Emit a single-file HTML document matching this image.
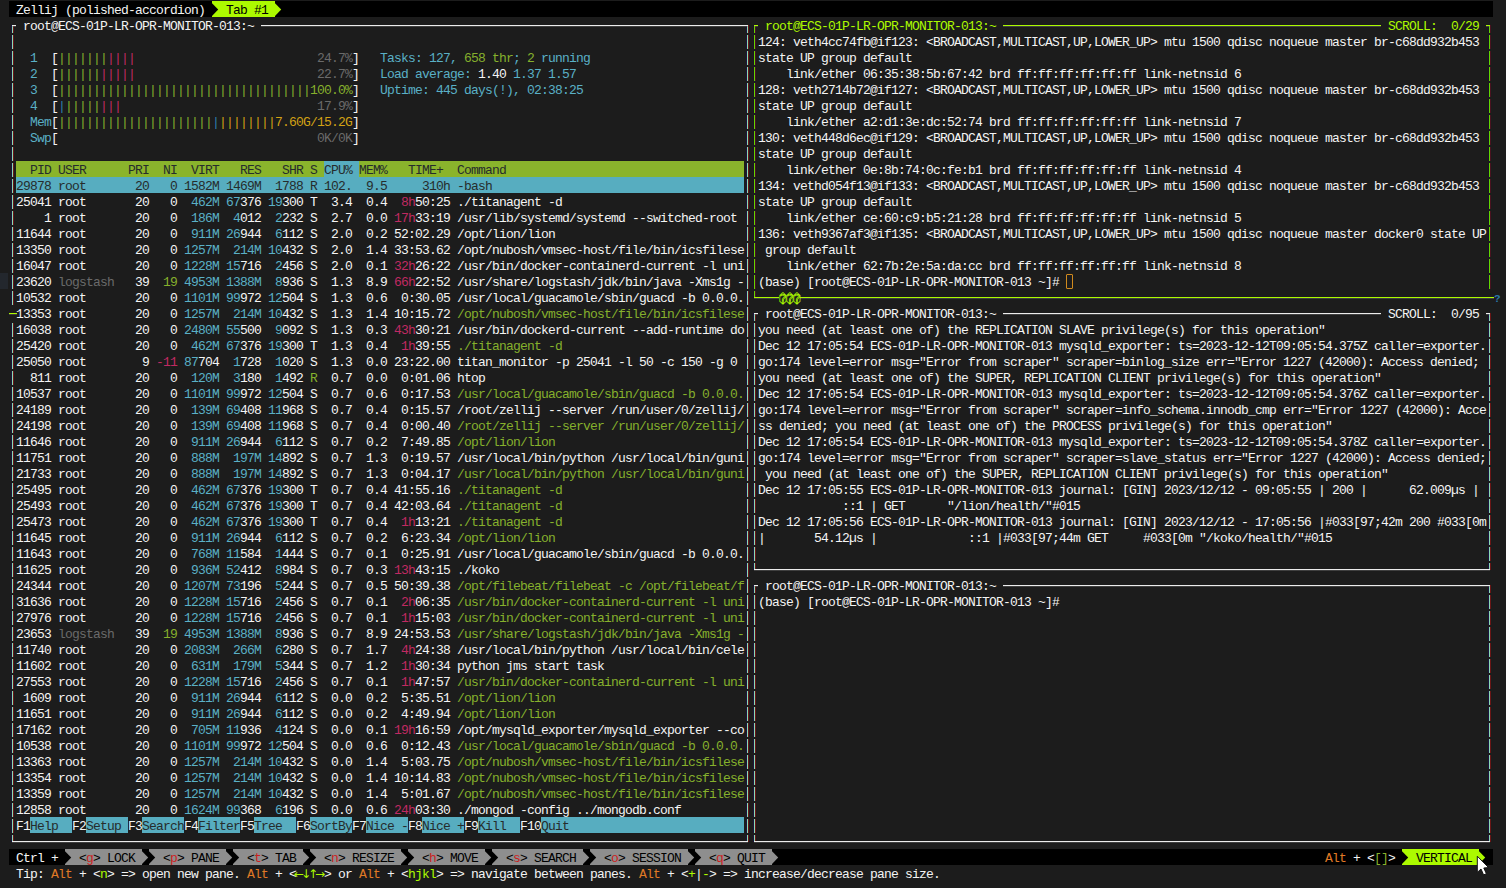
<!DOCTYPE html>
<html lang="en"><head><meta charset="utf-8"><title>Zellij (polished-accordion)</title>
<style>
html,body{margin:0;padding:0}
body{width:1506px;height:888px;overflow:hidden;background:#1c1c1c;position:relative;font-family:"Liberation Mono",monospace;font-size:13.0px;letter-spacing:-0.8013px;}
#s{position:absolute;left:0;top:0;width:1506px;height:888px;overflow:hidden}
.r{position:absolute;left:0;height:16px;line-height:16px;white-space:pre}
.r span{position:absolute;top:2px;height:16px;line-height:16px;white-space:pre}
.b{position:absolute;height:16px}
i{display:block;font-style:normal}
.h{position:absolute;height:1px;box-shadow:0 1px 0 rgba(128,128,128,.35)}
.s{position:absolute;width:1px}
.v{position:absolute;width:3px;background-repeat:no-repeat;background-size:1px 100%,1px 100%,1px 100%;background-position:0 0,1px 0,2px 0}
.vw{background-image:repeating-linear-gradient(to bottom,transparent 0,transparent 2px,#1a1440 2px,#1a1440 16px),repeating-linear-gradient(to bottom,transparent 0,transparent 2px,#8cdab4 2px,#8cdab4 16px),repeating-linear-gradient(to bottom,transparent 0,transparent 2px,#6a1616 2px,#6a1616 16px)}
.vg{background-image:repeating-linear-gradient(to bottom,transparent 0,transparent 2px,#1a1224 2px,#1a1224 16px),repeating-linear-gradient(to bottom,transparent 0,transparent 2px,#62d800 2px,#62d800 16px),repeating-linear-gradient(to bottom,transparent 0,transparent 2px,#4a1220 2px,#4a1220 16px)}
.sw{background:#8cdab4;box-shadow:-1px 0 0 #1a1440,1px 0 0 #6a1616}
.sg{background:#62d800;box-shadow:-1px 0 0 #1a1224,1px 0 0 #4a1220}
.a{position:absolute;display:block}
.r span.fuD{font-family:"DejaVu Sans Mono",monospace;font-size:12px;letter-spacing:-.22px;top:2px;color:transparent;-webkit-text-stroke:.7px #acfa00}
.r span.fuA{font-family:"DejaVu Sans",sans-serif;font-size:12px;letter-spacing:0;margin-left:-2px;top:1px}
.cur{position:absolute;width:5px;height:13px;border:1px solid #d08a1e;border-radius:1px;margin-top:1px}
.fw{color:#f4f4f4}
.fc{color:#5ab0c6}
.fg{color:#86b02c}
.fuG{color:#acfa00}
.fm{color:#c02a62}
.fy{color:#d2a114}
.fo{color:#e07a26}
.fd{color:#6a6a6a}
.fk{color:#262c2c}
.fuK{color:#000000}
.fr{color:#cc1f1f}
.fb{color:#2f7fb0}
.fuA{color:#acfa00}
.fuD{color:#9fe800}
</style></head><body><div id="s">
<i class="b" style="left:9px;top:1px;width:1484px;background:#000"></i><i class="b" style="left:219px;top:1px;width:56px;background:#acfa00"></i><i class="b" style="left:16px;top:161px;width:728px;background:#8ab42c"></i><i class="b" style="left:324px;top:161px;width:35px;background:#57adc0"></i><i class="b" style="left:16px;top:177px;width:728px;background:#57adc0"></i><i class="b" style="left:30px;top:817px;width:42px;background:#57adc0"></i><i class="b" style="left:86px;top:817px;width:42px;background:#57adc0"></i><i class="b" style="left:142px;top:817px;width:42px;background:#57adc0"></i><i class="b" style="left:198px;top:817px;width:42px;background:#57adc0"></i><i class="b" style="left:254px;top:817px;width:42px;background:#57adc0"></i><i class="b" style="left:310px;top:817px;width:42px;background:#57adc0"></i><i class="b" style="left:366px;top:817px;width:42px;background:#57adc0"></i><i class="b" style="left:422px;top:817px;width:42px;background:#57adc0"></i><i class="b" style="left:478px;top:817px;width:42px;background:#57adc0"></i><i class="b" style="left:541px;top:817px;width:203px;background:#57adc0"></i><i class="b" style="left:9px;top:849px;width:1484px;background:#000"></i><i class="b" style="left:72px;top:849px;width:70px;background:#8e8e8e"></i><i class="b" style="left:156px;top:849px;width:70px;background:#8e8e8e"></i><i class="b" style="left:240px;top:849px;width:63px;background:#8e8e8e"></i><i class="b" style="left:317px;top:849px;width:84px;background:#8e8e8e"></i><i class="b" style="left:415px;top:849px;width:70px;background:#8e8e8e"></i><i class="b" style="left:499px;top:849px;width:84px;background:#8e8e8e"></i><i class="b" style="left:597px;top:849px;width:91px;background:#8e8e8e"></i><i class="b" style="left:702px;top:849px;width:70px;background:#8e8e8e"></i><i class="b" style="left:1409px;top:849px;width:70px;background:#acfa00"></i>
<svg class="a" style="left:212px;top:1px;background:#acfa00" width="7" height="16" viewBox="0 0 7 16"><polygon points="0,2.3 6.2,8.6 0,14.9" fill="#000"/></svg><svg class="a" style="left:275px;top:1px;background:#000" width="7" height="16" viewBox="0 0 7 16"><polygon points="0,2.3 6.2,8.6 0,14.9" fill="#acfa00"/></svg><i class="s sw" style="left:12px;top:25px;height:8px"></i><i class="h" style="left:12px;top:25px;width:4px;background:#ececec"></i><i class="h" style="left:261px;top:25px;width:483px;background:#ececec"></i><i class="s sw" style="left:747px;top:25px;height:8px"></i><i class="h" style="left:744px;top:25px;width:4px;background:#ececec"></i><i class="v vw" style="left:11px;top:33px;height:272px"></i><i class="v vw" style="left:11px;top:321px;height:512px"></i><i class="v vw" style="left:746px;top:33px;height:800px"></i><i class="s sw" style="left:12px;top:835px;height:7px"></i><i class="h" style="left:12px;top:841px;width:4px;background:#ececec"></i><i class="h" style="left:16px;top:841px;width:728px;background:#ececec"></i><i class="s sw" style="left:747px;top:835px;height:7px"></i><i class="h" style="left:744px;top:841px;width:4px;background:#ececec"></i><i class="s sg" style="left:754px;top:25px;height:8px"></i><i class="h" style="left:754px;top:25px;width:4px;background:#acfa00"></i><i class="h" style="left:1003px;top:25px;width:378px;background:#acfa00"></i><i class="s sg" style="left:1489px;top:25px;height:8px"></i><i class="h" style="left:1486px;top:25px;width:4px;background:#acfa00"></i><i class="v vg" style="left:753px;top:33px;height:256px"></i><i class="v vg" style="left:1488px;top:33px;height:256px"></i><i class="s sg" style="left:754px;top:291px;height:7px"></i><i class="h" style="left:754px;top:297px;width:4px;background:#acfa00"></i><i class="h" style="left:758px;top:297px;width:21px;background:#acfa00"></i><i class="h" style="left:800px;top:297px;width:694px;background:#acfa00"></i><i class="s sw" style="left:754px;top:313px;height:8px"></i><i class="h" style="left:754px;top:313px;width:4px;background:#ececec"></i><i class="h" style="left:1003px;top:313px;width:378px;background:#ececec"></i><i class="s sw" style="left:1489px;top:313px;height:8px"></i><i class="h" style="left:1486px;top:313px;width:4px;background:#ececec"></i><i class="v vw" style="left:753px;top:321px;height:240px"></i><i class="v vw" style="left:1488px;top:321px;height:240px"></i><i class="s sw" style="left:754px;top:563px;height:7px"></i><i class="h" style="left:754px;top:569px;width:4px;background:#ececec"></i><i class="h" style="left:758px;top:569px;width:728px;background:#ececec"></i><i class="s sw" style="left:1489px;top:563px;height:7px"></i><i class="h" style="left:1486px;top:569px;width:4px;background:#ececec"></i><i class="s sw" style="left:754px;top:585px;height:8px"></i><i class="h" style="left:754px;top:585px;width:4px;background:#ececec"></i><i class="h" style="left:1003px;top:585px;width:483px;background:#ececec"></i><i class="s sw" style="left:1489px;top:585px;height:8px"></i><i class="h" style="left:1486px;top:585px;width:4px;background:#ececec"></i><i class="v vw" style="left:753px;top:593px;height:240px"></i><i class="v vw" style="left:1488px;top:593px;height:240px"></i><i class="s sw" style="left:754px;top:835px;height:7px"></i><i class="h" style="left:754px;top:841px;width:4px;background:#ececec"></i><i class="h" style="left:758px;top:841px;width:728px;background:#ececec"></i><i class="s sw" style="left:1489px;top:835px;height:7px"></i><i class="h" style="left:1486px;top:841px;width:4px;background:#ececec"></i><i class="cur" style="left:1066px;top:273px"></i><svg class="a" style="left:65px;top:849px;background:#8e8e8e" width="7" height="16" viewBox="0 0 7 16"><polygon points="0,2.3 6.2,8.6 0,14.9" fill="#000"/></svg><svg class="a" style="left:142px;top:849px;background:#000" width="7" height="16" viewBox="0 0 7 16"><polygon points="0,2.3 6.2,8.6 0,14.9" fill="#8e8e8e"/></svg><svg class="a" style="left:149px;top:849px;background:#8e8e8e" width="7" height="16" viewBox="0 0 7 16"><polygon points="0,2.3 6.2,8.6 0,14.9" fill="#000"/></svg><svg class="a" style="left:226px;top:849px;background:#000" width="7" height="16" viewBox="0 0 7 16"><polygon points="0,2.3 6.2,8.6 0,14.9" fill="#8e8e8e"/></svg><svg class="a" style="left:233px;top:849px;background:#8e8e8e" width="7" height="16" viewBox="0 0 7 16"><polygon points="0,2.3 6.2,8.6 0,14.9" fill="#000"/></svg><svg class="a" style="left:303px;top:849px;background:#000" width="7" height="16" viewBox="0 0 7 16"><polygon points="0,2.3 6.2,8.6 0,14.9" fill="#8e8e8e"/></svg><svg class="a" style="left:310px;top:849px;background:#8e8e8e" width="7" height="16" viewBox="0 0 7 16"><polygon points="0,2.3 6.2,8.6 0,14.9" fill="#000"/></svg><svg class="a" style="left:401px;top:849px;background:#000" width="7" height="16" viewBox="0 0 7 16"><polygon points="0,2.3 6.2,8.6 0,14.9" fill="#8e8e8e"/></svg><svg class="a" style="left:408px;top:849px;background:#8e8e8e" width="7" height="16" viewBox="0 0 7 16"><polygon points="0,2.3 6.2,8.6 0,14.9" fill="#000"/></svg><svg class="a" style="left:485px;top:849px;background:#000" width="7" height="16" viewBox="0 0 7 16"><polygon points="0,2.3 6.2,8.6 0,14.9" fill="#8e8e8e"/></svg><svg class="a" style="left:492px;top:849px;background:#8e8e8e" width="7" height="16" viewBox="0 0 7 16"><polygon points="0,2.3 6.2,8.6 0,14.9" fill="#000"/></svg><svg class="a" style="left:583px;top:849px;background:#000" width="7" height="16" viewBox="0 0 7 16"><polygon points="0,2.3 6.2,8.6 0,14.9" fill="#8e8e8e"/></svg><svg class="a" style="left:590px;top:849px;background:#8e8e8e" width="7" height="16" viewBox="0 0 7 16"><polygon points="0,2.3 6.2,8.6 0,14.9" fill="#000"/></svg><svg class="a" style="left:688px;top:849px;background:#000" width="7" height="16" viewBox="0 0 7 16"><polygon points="0,2.3 6.2,8.6 0,14.9" fill="#8e8e8e"/></svg><svg class="a" style="left:695px;top:849px;background:#8e8e8e" width="7" height="16" viewBox="0 0 7 16"><polygon points="0,2.3 6.2,8.6 0,14.9" fill="#000"/></svg><svg class="a" style="left:772px;top:849px;background:#000" width="7" height="16" viewBox="0 0 7 16"><polygon points="0,2.3 6.2,8.6 0,14.9" fill="#8e8e8e"/></svg><svg class="a" style="left:1402px;top:849px;background:#acfa00" width="7" height="16" viewBox="0 0 7 16"><polygon points="0,2.3 6.2,8.6 0,14.9" fill="#000"/></svg><svg class="a" style="left:1479px;top:849px;background:#000" width="7" height="16" viewBox="0 0 7 16"><polygon points="0,2.3 6.2,8.6 0,14.9" fill="#acfa00"/></svg><i style="position:absolute;left:0;top:273px;width:8px;height:16px;background:#23272d"></i><i class="h" style="left:9px;top:313px;width:8px;background:#acfa00"></i><span style="position:absolute;left:1494px;top:291px;font-size:11px;font-weight:bold;line-height:16px;color:#2a78a8">?</span><svg style="position:absolute;left:1476px;top:855px" width="14" height="21" viewBox="0 0 14 21"><path d="M1.3 1.2 L1.3 17.4 L5 14 L7.6 19.9 L10.4 18.7 L7.8 13 L12.6 12.6 Z" fill="#fff" stroke="#111" stroke-width="1"/></svg>
<div class="r" style="top:1px"><span class="fw" style="left:16px">Zellij (polished-accordion)</span><span class="fuK" style="left:226px">Tab #1</span></div>
<div class="r" style="top:17px"><span class="fw" style="left:23px">root@ECS-01P-LR-OPR-MONITOR-013:~</span><span class="fuG" style="left:765px">root@ECS-01P-LR-OPR-MONITOR-013:~</span><span class="fuG" style="left:1388px">SCROLL:  0/29</span></div>
<div class="r" style="top:33px"><span class="fw" style="left:758px">124: veth4cc74fb@if123: &lt;BROADCAST,MULTICAST,UP,LOWER_UP&gt; mtu 1500 qdisc noqueue master br-c68dd932b453</span></div>
<div class="r" style="top:49px"><span class="fc" style="left:30px">1</span><span class="fw" style="left:51px">[</span><span class="fg" style="left:58px">|||||||</span><span class="fm" style="left:107px">||||</span><span class="fd" style="left:317px">24.7%</span><span class="fw" style="left:352px">]</span><span class="fc" style="left:380px">Tasks:</span><span class="fc" style="left:429px">127</span><span class="fc" style="left:450px">,</span><span class="fg" style="left:464px">658 thr</span><span class="fc" style="left:513px">;</span><span class="fg" style="left:527px">2</span><span class="fc" style="left:541px">running</span><span class="fw" style="left:758px">state UP group default</span></div>
<div class="r" style="top:65px"><span class="fc" style="left:30px">2</span><span class="fw" style="left:51px">[</span><span class="fg" style="left:58px">||||||</span><span class="fm" style="left:100px">|||||</span><span class="fd" style="left:317px">22.7%</span><span class="fw" style="left:352px">]</span><span class="fc" style="left:380px">Load average:</span><span class="fw" style="left:478px">1.40</span><span class="fc" style="left:513px">1.37</span><span class="fc" style="left:548px">1.57</span><span class="fw" style="left:786px">link/ether 06:35:38:5b:67:42 brd ff:ff:ff:ff:ff:ff link-netnsid 6</span></div>
<div class="r" style="top:81px"><span class="fc" style="left:30px">3</span><span class="fw" style="left:51px">[</span><span class="fg" style="left:58px">||||||||||||||||||||||||||||||||||||</span><span class="fg" style="left:310px">100.0%</span><span class="fw" style="left:352px">]</span><span class="fc" style="left:380px">Uptime:</span><span class="fc" style="left:436px">445 days(!), 02:38:25</span><span class="fw" style="left:758px">128: veth2714b72@if127: &lt;BROADCAST,MULTICAST,UP,LOWER_UP&gt; mtu 1500 qdisc noqueue master br-c68dd932b453</span></div>
<div class="r" style="top:97px"><span class="fc" style="left:30px">4</span><span class="fw" style="left:51px">[</span><span class="fb" style="left:58px">|</span><span class="fg" style="left:65px">|||||</span><span class="fm" style="left:100px">|||</span><span class="fd" style="left:317px">17.9%</span><span class="fw" style="left:352px">]</span><span class="fw" style="left:758px">state UP group default</span></div>
<div class="r" style="top:113px"><span class="fc" style="left:30px">Mem</span><span class="fw" style="left:51px">[</span><span class="fg" style="left:58px">||||||||||||||||||||||</span><span class="fb" style="left:212px">|</span><span class="fy" style="left:219px">||||||||</span><span class="fy" style="left:275px">7.60G/15.2G</span><span class="fw" style="left:352px">]</span><span class="fw" style="left:786px">link/ether a2:d1:3e:dc:52:74 brd ff:ff:ff:ff:ff:ff link-netnsid 7</span></div>
<div class="r" style="top:129px"><span class="fc" style="left:30px">Swp</span><span class="fw" style="left:51px">[</span><span class="fd" style="left:317px">0K/0K</span><span class="fw" style="left:352px">]</span><span class="fw" style="left:758px">130: veth448d6ec@if129: &lt;BROADCAST,MULTICAST,UP,LOWER_UP&gt; mtu 1500 qdisc noqueue master br-c68dd932b453</span></div>
<div class="r" style="top:145px"><span class="fw" style="left:758px">state UP group default</span></div>
<div class="r" style="top:161px"><span class="fk" style="left:30px">PID USER      PRI  NI  VIRT   RES   SHR S CPU% MEM%   TIME+  Command</span><span class="fw" style="left:786px">link/ether 0e:8b:74:0c:fe:b1 brd ff:ff:ff:ff:ff:ff link-netnsid 4</span></div>
<div class="r" style="top:177px"><span class="fk" style="left:16px">29878 root       20   0 1582M 1469M  1788 R 102.  9.5     310h -bash</span><span class="fw" style="left:758px">134: vethd054f13@if133: &lt;BROADCAST,MULTICAST,UP,LOWER_UP&gt; mtu 1500 qdisc noqueue master br-c68dd932b453</span></div>
<div class="r" style="top:193px"><span class="fw" style="left:16px">25041</span><span class="fw" style="left:58px">root</span><span class="fw" style="left:135px">20</span><span class="fw" style="left:170px">0</span><span class="fc" style="left:191px">462M</span><span class="fc" style="left:226px">67</span><span class="fw" style="left:240px">376</span><span class="fc" style="left:268px">19</span><span class="fw" style="left:282px">300</span><span class="fw" style="left:310px">T</span><span class="fw" style="left:331px">3.4</span><span class="fw" style="left:366px">0.4</span><span class="fm" style="left:401px">8h</span><span class="fw" style="left:415px">50:25</span><span class="fw" style="left:457px">./titanagent -d</span><span class="fw" style="left:758px">state UP group default</span></div>
<div class="r" style="top:209px"><span class="fw" style="left:44px">1</span><span class="fw" style="left:58px">root</span><span class="fw" style="left:135px">20</span><span class="fw" style="left:170px">0</span><span class="fc" style="left:191px">186M</span><span class="fc" style="left:233px">4</span><span class="fw" style="left:240px">012</span><span class="fc" style="left:275px">2</span><span class="fw" style="left:282px">232</span><span class="fw" style="left:310px">S</span><span class="fw" style="left:331px">2.7</span><span class="fw" style="left:366px">0.0</span><span class="fm" style="left:394px">17h</span><span class="fw" style="left:415px">33:19</span><span class="fw" style="left:457px">/usr/lib/systemd/systemd --switched-root</span><span class="fw" style="left:786px">link/ether ce:60:c9:b5:21:28 brd ff:ff:ff:ff:ff:ff link-netnsid 5</span></div>
<div class="r" style="top:225px"><span class="fw" style="left:16px">11644</span><span class="fw" style="left:58px">root</span><span class="fw" style="left:135px">20</span><span class="fw" style="left:170px">0</span><span class="fc" style="left:191px">911M</span><span class="fc" style="left:226px">26</span><span class="fw" style="left:240px">944</span><span class="fc" style="left:275px">6</span><span class="fw" style="left:282px">112</span><span class="fw" style="left:310px">S</span><span class="fw" style="left:331px">2.0</span><span class="fw" style="left:366px">0.2</span><span class="fw" style="left:394px">52:02.29</span><span class="fw" style="left:457px">/opt/lion/lion</span><span class="fw" style="left:758px">136: veth9367af3@if135: &lt;BROADCAST,MULTICAST,UP,LOWER_UP&gt; mtu 1500 qdisc noqueue master docker0 state UP</span></div>
<div class="r" style="top:241px"><span class="fw" style="left:16px">13350</span><span class="fw" style="left:58px">root</span><span class="fw" style="left:135px">20</span><span class="fw" style="left:170px">0</span><span class="fc" style="left:184px">1257M</span><span class="fc" style="left:233px">214M</span><span class="fc" style="left:268px">10</span><span class="fw" style="left:282px">432</span><span class="fw" style="left:310px">S</span><span class="fw" style="left:331px">2.0</span><span class="fw" style="left:366px">1.4</span><span class="fw" style="left:394px">33:53.62</span><span class="fw" style="left:457px">/opt/nubosh/vmsec-host/file/bin/icsfilese</span><span class="fw" style="left:765px">group default</span></div>
<div class="r" style="top:257px"><span class="fw" style="left:16px">16047</span><span class="fw" style="left:58px">root</span><span class="fw" style="left:135px">20</span><span class="fw" style="left:170px">0</span><span class="fc" style="left:184px">1228M</span><span class="fc" style="left:226px">15</span><span class="fw" style="left:240px">716</span><span class="fc" style="left:275px">2</span><span class="fw" style="left:282px">456</span><span class="fw" style="left:310px">S</span><span class="fw" style="left:331px">2.0</span><span class="fw" style="left:366px">0.1</span><span class="fm" style="left:394px">32h</span><span class="fw" style="left:415px">26:22</span><span class="fw" style="left:457px">/usr/bin/docker-containerd-current -l uni</span><span class="fw" style="left:786px">link/ether 62:7b:2e:5a:da:cc brd ff:ff:ff:ff:ff:ff link-netnsid 8</span></div>
<div class="r" style="top:273px"><span class="fw" style="left:16px">23620</span><span class="fd" style="left:58px">logstash</span><span class="fw" style="left:135px">39</span><span class="fg" style="left:163px">19</span><span class="fc" style="left:184px">4953M</span><span class="fc" style="left:226px">1388M</span><span class="fc" style="left:275px">8</span><span class="fw" style="left:282px">936</span><span class="fw" style="left:310px">S</span><span class="fw" style="left:331px">1.3</span><span class="fw" style="left:366px">8.9</span><span class="fm" style="left:394px">66h</span><span class="fw" style="left:415px">22:52</span><span class="fw" style="left:457px">/usr/share/logstash/jdk/bin/java -Xms1g -</span><span class="fw" style="left:758px">(base) [root@ECS-01P-LR-OPR-MONITOR-013 ~]#</span></div>
<div class="r" style="top:289px"><span class="fw" style="left:16px">10532</span><span class="fw" style="left:58px">root</span><span class="fw" style="left:135px">20</span><span class="fw" style="left:170px">0</span><span class="fc" style="left:184px">1101M</span><span class="fc" style="left:226px">99</span><span class="fw" style="left:240px">972</span><span class="fc" style="left:268px">12</span><span class="fw" style="left:282px">504</span><span class="fw" style="left:310px">S</span><span class="fw" style="left:331px">1.3</span><span class="fw" style="left:366px">0.6</span><span class="fw" style="left:401px">0:30.05</span><span class="fw" style="left:457px">/usr/local/guacamole/sbin/guacd -b 0.0.0.</span><span class="fuD" style="left:779px">���</span></div>
<div class="r" style="top:305px"><span class="fw" style="left:16px">13353</span><span class="fw" style="left:58px">root</span><span class="fw" style="left:135px">20</span><span class="fw" style="left:170px">0</span><span class="fc" style="left:184px">1257M</span><span class="fc" style="left:233px">214M</span><span class="fc" style="left:268px">10</span><span class="fw" style="left:282px">432</span><span class="fw" style="left:310px">S</span><span class="fw" style="left:331px">1.3</span><span class="fw" style="left:366px">1.4</span><span class="fw" style="left:394px">10:15.72</span><span class="fg" style="left:457px">/opt/nubosh/vmsec-host/file/bin/icsfilese</span><span class="fw" style="left:765px">root@ECS-01P-LR-OPR-MONITOR-013:~</span><span class="fw" style="left:1388px">SCROLL:  0/95</span></div>
<div class="r" style="top:321px"><span class="fw" style="left:16px">16038</span><span class="fw" style="left:58px">root</span><span class="fw" style="left:135px">20</span><span class="fw" style="left:170px">0</span><span class="fc" style="left:184px">2480M</span><span class="fc" style="left:226px">55</span><span class="fw" style="left:240px">500</span><span class="fc" style="left:275px">9</span><span class="fw" style="left:282px">092</span><span class="fw" style="left:310px">S</span><span class="fw" style="left:331px">1.3</span><span class="fw" style="left:366px">0.3</span><span class="fm" style="left:394px">43h</span><span class="fw" style="left:415px">30:21</span><span class="fw" style="left:457px">/usr/bin/dockerd-current --add-runtime do</span><span class="fw" style="left:758px">you need (at least one of) the REPLICATION SLAVE privilege(s) for this operation"</span></div>
<div class="r" style="top:337px"><span class="fw" style="left:16px">25420</span><span class="fw" style="left:58px">root</span><span class="fw" style="left:135px">20</span><span class="fw" style="left:170px">0</span><span class="fc" style="left:191px">462M</span><span class="fc" style="left:226px">67</span><span class="fw" style="left:240px">376</span><span class="fc" style="left:268px">19</span><span class="fw" style="left:282px">300</span><span class="fw" style="left:310px">T</span><span class="fw" style="left:331px">1.3</span><span class="fw" style="left:366px">0.4</span><span class="fm" style="left:401px">1h</span><span class="fw" style="left:415px">39:55</span><span class="fg" style="left:457px">./titanagent -d</span><span class="fw" style="left:758px">Dec 12 17:05:54 ECS-01P-LR-OPR-MONITOR-013 mysqld_exporter: ts=2023-12-12T09:05:54.375Z caller=exporter.</span></div>
<div class="r" style="top:353px"><span class="fw" style="left:16px">25050</span><span class="fw" style="left:58px">root</span><span class="fw" style="left:142px">9</span><span class="fm" style="left:156px">-11</span><span class="fc" style="left:184px">87</span><span class="fw" style="left:198px">704</span><span class="fc" style="left:233px">1</span><span class="fw" style="left:240px">728</span><span class="fc" style="left:275px">1</span><span class="fw" style="left:282px">020</span><span class="fw" style="left:310px">S</span><span class="fw" style="left:331px">1.3</span><span class="fw" style="left:366px">0.0</span><span class="fw" style="left:394px">23:22.00</span><span class="fw" style="left:457px">titan_monitor -p 25041 -l 50 -c 150 -g 0</span><span class="fw" style="left:758px">go:174 level=error msg="Error from scraper" scraper=binlog_size err="Error 1227 (42000): Access denied;</span></div>
<div class="r" style="top:369px"><span class="fw" style="left:30px">811</span><span class="fw" style="left:58px">root</span><span class="fw" style="left:135px">20</span><span class="fw" style="left:170px">0</span><span class="fc" style="left:191px">120M</span><span class="fc" style="left:233px">3</span><span class="fw" style="left:240px">180</span><span class="fc" style="left:275px">1</span><span class="fw" style="left:282px">492</span><span class="fg" style="left:310px">R</span><span class="fw" style="left:331px">0.7</span><span class="fw" style="left:366px">0.0</span><span class="fw" style="left:401px">0:01.06</span><span class="fw" style="left:457px">htop</span><span class="fw" style="left:758px">you need (at least one of) the SUPER, REPLICATION CLIENT privilege(s) for this operation"</span></div>
<div class="r" style="top:385px"><span class="fw" style="left:16px">10537</span><span class="fw" style="left:58px">root</span><span class="fw" style="left:135px">20</span><span class="fw" style="left:170px">0</span><span class="fc" style="left:184px">1101M</span><span class="fc" style="left:226px">99</span><span class="fw" style="left:240px">972</span><span class="fc" style="left:268px">12</span><span class="fw" style="left:282px">504</span><span class="fw" style="left:310px">S</span><span class="fw" style="left:331px">0.7</span><span class="fw" style="left:366px">0.6</span><span class="fw" style="left:401px">0:17.53</span><span class="fg" style="left:457px">/usr/local/guacamole/sbin/guacd -b 0.0.0.</span><span class="fw" style="left:758px">Dec 12 17:05:54 ECS-01P-LR-OPR-MONITOR-013 mysqld_exporter: ts=2023-12-12T09:05:54.376Z caller=exporter.</span></div>
<div class="r" style="top:401px"><span class="fw" style="left:16px">24189</span><span class="fw" style="left:58px">root</span><span class="fw" style="left:135px">20</span><span class="fw" style="left:170px">0</span><span class="fc" style="left:191px">139M</span><span class="fc" style="left:226px">69</span><span class="fw" style="left:240px">408</span><span class="fc" style="left:268px">11</span><span class="fw" style="left:282px">968</span><span class="fw" style="left:310px">S</span><span class="fw" style="left:331px">0.7</span><span class="fw" style="left:366px">0.4</span><span class="fw" style="left:401px">0:15.57</span><span class="fw" style="left:457px">/root/zellij --server /run/user/0/zellij/</span><span class="fw" style="left:758px">go:174 level=error msg="Error from scraper" scraper=info_schema.innodb_cmp err="Error 1227 (42000): Acce</span></div>
<div class="r" style="top:417px"><span class="fw" style="left:16px">24198</span><span class="fw" style="left:58px">root</span><span class="fw" style="left:135px">20</span><span class="fw" style="left:170px">0</span><span class="fc" style="left:191px">139M</span><span class="fc" style="left:226px">69</span><span class="fw" style="left:240px">408</span><span class="fc" style="left:268px">11</span><span class="fw" style="left:282px">968</span><span class="fw" style="left:310px">S</span><span class="fw" style="left:331px">0.7</span><span class="fw" style="left:366px">0.4</span><span class="fw" style="left:401px">0:00.40</span><span class="fg" style="left:457px">/root/zellij --server /run/user/0/zellij/</span><span class="fw" style="left:758px">ss denied; you need (at least one of) the PROCESS privilege(s) for this operation"</span></div>
<div class="r" style="top:433px"><span class="fw" style="left:16px">11646</span><span class="fw" style="left:58px">root</span><span class="fw" style="left:135px">20</span><span class="fw" style="left:170px">0</span><span class="fc" style="left:191px">911M</span><span class="fc" style="left:226px">26</span><span class="fw" style="left:240px">944</span><span class="fc" style="left:275px">6</span><span class="fw" style="left:282px">112</span><span class="fw" style="left:310px">S</span><span class="fw" style="left:331px">0.7</span><span class="fw" style="left:366px">0.2</span><span class="fw" style="left:401px">7:49.85</span><span class="fg" style="left:457px">/opt/lion/lion</span><span class="fw" style="left:758px">Dec 12 17:05:54 ECS-01P-LR-OPR-MONITOR-013 mysqld_exporter: ts=2023-12-12T09:05:54.378Z caller=exporter.</span></div>
<div class="r" style="top:449px"><span class="fw" style="left:16px">11751</span><span class="fw" style="left:58px">root</span><span class="fw" style="left:135px">20</span><span class="fw" style="left:170px">0</span><span class="fc" style="left:191px">888M</span><span class="fc" style="left:233px">197M</span><span class="fc" style="left:268px">14</span><span class="fw" style="left:282px">892</span><span class="fw" style="left:310px">S</span><span class="fw" style="left:331px">0.7</span><span class="fw" style="left:366px">1.3</span><span class="fw" style="left:401px">0:19.57</span><span class="fw" style="left:457px">/usr/local/bin/python /usr/local/bin/guni</span><span class="fw" style="left:758px">go:174 level=error msg="Error from scraper" scraper=slave_status err="Error 1227 (42000): Access denied;</span></div>
<div class="r" style="top:465px"><span class="fw" style="left:16px">21733</span><span class="fw" style="left:58px">root</span><span class="fw" style="left:135px">20</span><span class="fw" style="left:170px">0</span><span class="fc" style="left:191px">888M</span><span class="fc" style="left:233px">197M</span><span class="fc" style="left:268px">14</span><span class="fw" style="left:282px">892</span><span class="fw" style="left:310px">S</span><span class="fw" style="left:331px">0.7</span><span class="fw" style="left:366px">1.3</span><span class="fw" style="left:401px">0:04.17</span><span class="fg" style="left:457px">/usr/local/bin/python /usr/local/bin/guni</span><span class="fw" style="left:765px">you need (at least one of) the SUPER, REPLICATION CLIENT privilege(s) for this operation"</span></div>
<div class="r" style="top:481px"><span class="fw" style="left:16px">25495</span><span class="fw" style="left:58px">root</span><span class="fw" style="left:135px">20</span><span class="fw" style="left:170px">0</span><span class="fc" style="left:191px">462M</span><span class="fc" style="left:226px">67</span><span class="fw" style="left:240px">376</span><span class="fc" style="left:268px">19</span><span class="fw" style="left:282px">300</span><span class="fw" style="left:310px">T</span><span class="fw" style="left:331px">0.7</span><span class="fw" style="left:366px">0.4</span><span class="fw" style="left:394px">41:55.16</span><span class="fg" style="left:457px">./titanagent -d</span><span class="fw" style="left:758px">Dec 12 17:05:55 ECS-01P-LR-OPR-MONITOR-013 journal: [GIN] 2023/12/12 - 09:05:55 | 200 |      62.009µs |</span></div>
<div class="r" style="top:497px"><span class="fw" style="left:16px">25493</span><span class="fw" style="left:58px">root</span><span class="fw" style="left:135px">20</span><span class="fw" style="left:170px">0</span><span class="fc" style="left:191px">462M</span><span class="fc" style="left:226px">67</span><span class="fw" style="left:240px">376</span><span class="fc" style="left:268px">19</span><span class="fw" style="left:282px">300</span><span class="fw" style="left:310px">T</span><span class="fw" style="left:331px">0.7</span><span class="fw" style="left:366px">0.4</span><span class="fw" style="left:394px">42:03.64</span><span class="fg" style="left:457px">./titanagent -d</span><span class="fw" style="left:842px">::1 | GET      "/lion/health/"#015</span></div>
<div class="r" style="top:513px"><span class="fw" style="left:16px">25473</span><span class="fw" style="left:58px">root</span><span class="fw" style="left:135px">20</span><span class="fw" style="left:170px">0</span><span class="fc" style="left:191px">462M</span><span class="fc" style="left:226px">67</span><span class="fw" style="left:240px">376</span><span class="fc" style="left:268px">19</span><span class="fw" style="left:282px">300</span><span class="fw" style="left:310px">T</span><span class="fw" style="left:331px">0.7</span><span class="fw" style="left:366px">0.4</span><span class="fm" style="left:401px">1h</span><span class="fw" style="left:415px">13:21</span><span class="fg" style="left:457px">./titanagent -d</span><span class="fw" style="left:758px">Dec 12 17:05:56 ECS-01P-LR-OPR-MONITOR-013 journal: [GIN] 2023/12/12 - 17:05:56 |#033[97;42m 200 #033[0m</span></div>
<div class="r" style="top:529px"><span class="fw" style="left:16px">11645</span><span class="fw" style="left:58px">root</span><span class="fw" style="left:135px">20</span><span class="fw" style="left:170px">0</span><span class="fc" style="left:191px">911M</span><span class="fc" style="left:226px">26</span><span class="fw" style="left:240px">944</span><span class="fc" style="left:275px">6</span><span class="fw" style="left:282px">112</span><span class="fw" style="left:310px">S</span><span class="fw" style="left:331px">0.7</span><span class="fw" style="left:366px">0.2</span><span class="fw" style="left:401px">6:23.34</span><span class="fg" style="left:457px">/opt/lion/lion</span><span class="fw" style="left:758px">|       54.12µs |             ::1 |#033[97;44m GET     #033[0m "/koko/health/"#015</span></div>
<div class="r" style="top:545px"><span class="fw" style="left:16px">11643</span><span class="fw" style="left:58px">root</span><span class="fw" style="left:135px">20</span><span class="fw" style="left:170px">0</span><span class="fc" style="left:191px">768M</span><span class="fc" style="left:226px">11</span><span class="fw" style="left:240px">584</span><span class="fc" style="left:275px">1</span><span class="fw" style="left:282px">444</span><span class="fw" style="left:310px">S</span><span class="fw" style="left:331px">0.7</span><span class="fw" style="left:366px">0.1</span><span class="fw" style="left:401px">0:25.91</span><span class="fw" style="left:457px">/usr/local/guacamole/sbin/guacd -b 0.0.0.</span></div>
<div class="r" style="top:561px"><span class="fw" style="left:16px">11625</span><span class="fw" style="left:58px">root</span><span class="fw" style="left:135px">20</span><span class="fw" style="left:170px">0</span><span class="fc" style="left:191px">936M</span><span class="fc" style="left:226px">52</span><span class="fw" style="left:240px">412</span><span class="fc" style="left:275px">8</span><span class="fw" style="left:282px">984</span><span class="fw" style="left:310px">S</span><span class="fw" style="left:331px">0.7</span><span class="fw" style="left:366px">0.3</span><span class="fm" style="left:394px">13h</span><span class="fw" style="left:415px">43:15</span><span class="fw" style="left:457px">./koko</span></div>
<div class="r" style="top:577px"><span class="fw" style="left:16px">24344</span><span class="fw" style="left:58px">root</span><span class="fw" style="left:135px">20</span><span class="fw" style="left:170px">0</span><span class="fc" style="left:184px">1207M</span><span class="fc" style="left:226px">73</span><span class="fw" style="left:240px">196</span><span class="fc" style="left:275px">5</span><span class="fw" style="left:282px">244</span><span class="fw" style="left:310px">S</span><span class="fw" style="left:331px">0.7</span><span class="fw" style="left:366px">0.5</span><span class="fw" style="left:394px">50:39.38</span><span class="fg" style="left:457px">/opt/filebeat/filebeat -c /opt/filebeat/f</span><span class="fw" style="left:765px">root@ECS-01P-LR-OPR-MONITOR-013:~</span></div>
<div class="r" style="top:593px"><span class="fw" style="left:16px">31636</span><span class="fw" style="left:58px">root</span><span class="fw" style="left:135px">20</span><span class="fw" style="left:170px">0</span><span class="fc" style="left:184px">1228M</span><span class="fc" style="left:226px">15</span><span class="fw" style="left:240px">716</span><span class="fc" style="left:275px">2</span><span class="fw" style="left:282px">456</span><span class="fw" style="left:310px">S</span><span class="fw" style="left:331px">0.7</span><span class="fw" style="left:366px">0.1</span><span class="fm" style="left:401px">2h</span><span class="fw" style="left:415px">06:35</span><span class="fg" style="left:457px">/usr/bin/docker-containerd-current -l uni</span><span class="fw" style="left:758px">(base) [root@ECS-01P-LR-OPR-MONITOR-013 ~]#</span></div>
<div class="r" style="top:609px"><span class="fw" style="left:16px">27976</span><span class="fw" style="left:58px">root</span><span class="fw" style="left:135px">20</span><span class="fw" style="left:170px">0</span><span class="fc" style="left:184px">1228M</span><span class="fc" style="left:226px">15</span><span class="fw" style="left:240px">716</span><span class="fc" style="left:275px">2</span><span class="fw" style="left:282px">456</span><span class="fw" style="left:310px">S</span><span class="fw" style="left:331px">0.7</span><span class="fw" style="left:366px">0.1</span><span class="fm" style="left:401px">1h</span><span class="fw" style="left:415px">15:03</span><span class="fg" style="left:457px">/usr/bin/docker-containerd-current -l uni</span></div>
<div class="r" style="top:625px"><span class="fw" style="left:16px">23653</span><span class="fd" style="left:58px">logstash</span><span class="fw" style="left:135px">39</span><span class="fg" style="left:163px">19</span><span class="fc" style="left:184px">4953M</span><span class="fc" style="left:226px">1388M</span><span class="fc" style="left:275px">8</span><span class="fw" style="left:282px">936</span><span class="fw" style="left:310px">S</span><span class="fw" style="left:331px">0.7</span><span class="fw" style="left:366px">8.9</span><span class="fw" style="left:394px">24:53.53</span><span class="fg" style="left:457px">/usr/share/logstash/jdk/bin/java -Xms1g -</span></div>
<div class="r" style="top:641px"><span class="fw" style="left:16px">11740</span><span class="fw" style="left:58px">root</span><span class="fw" style="left:135px">20</span><span class="fw" style="left:170px">0</span><span class="fc" style="left:184px">2083M</span><span class="fc" style="left:233px">266M</span><span class="fc" style="left:275px">6</span><span class="fw" style="left:282px">280</span><span class="fw" style="left:310px">S</span><span class="fw" style="left:331px">0.7</span><span class="fw" style="left:366px">1.7</span><span class="fm" style="left:401px">4h</span><span class="fw" style="left:415px">24:38</span><span class="fw" style="left:457px">/usr/local/bin/python /usr/local/bin/cele</span></div>
<div class="r" style="top:657px"><span class="fw" style="left:16px">11602</span><span class="fw" style="left:58px">root</span><span class="fw" style="left:135px">20</span><span class="fw" style="left:170px">0</span><span class="fc" style="left:191px">631M</span><span class="fc" style="left:233px">179M</span><span class="fc" style="left:275px">5</span><span class="fw" style="left:282px">344</span><span class="fw" style="left:310px">S</span><span class="fw" style="left:331px">0.7</span><span class="fw" style="left:366px">1.2</span><span class="fm" style="left:401px">1h</span><span class="fw" style="left:415px">30:34</span><span class="fw" style="left:457px">python jms start task</span></div>
<div class="r" style="top:673px"><span class="fw" style="left:16px">27553</span><span class="fw" style="left:58px">root</span><span class="fw" style="left:135px">20</span><span class="fw" style="left:170px">0</span><span class="fc" style="left:184px">1228M</span><span class="fc" style="left:226px">15</span><span class="fw" style="left:240px">716</span><span class="fc" style="left:275px">2</span><span class="fw" style="left:282px">456</span><span class="fw" style="left:310px">S</span><span class="fw" style="left:331px">0.7</span><span class="fw" style="left:366px">0.1</span><span class="fm" style="left:401px">1h</span><span class="fw" style="left:415px">47:57</span><span class="fg" style="left:457px">/usr/bin/docker-containerd-current -l uni</span></div>
<div class="r" style="top:689px"><span class="fw" style="left:23px">1609</span><span class="fw" style="left:58px">root</span><span class="fw" style="left:135px">20</span><span class="fw" style="left:170px">0</span><span class="fc" style="left:191px">911M</span><span class="fc" style="left:226px">26</span><span class="fw" style="left:240px">944</span><span class="fc" style="left:275px">6</span><span class="fw" style="left:282px">112</span><span class="fw" style="left:310px">S</span><span class="fw" style="left:331px">0.0</span><span class="fw" style="left:366px">0.2</span><span class="fw" style="left:401px">5:35.51</span><span class="fg" style="left:457px">/opt/lion/lion</span></div>
<div class="r" style="top:705px"><span class="fw" style="left:16px">11651</span><span class="fw" style="left:58px">root</span><span class="fw" style="left:135px">20</span><span class="fw" style="left:170px">0</span><span class="fc" style="left:191px">911M</span><span class="fc" style="left:226px">26</span><span class="fw" style="left:240px">944</span><span class="fc" style="left:275px">6</span><span class="fw" style="left:282px">112</span><span class="fw" style="left:310px">S</span><span class="fw" style="left:331px">0.0</span><span class="fw" style="left:366px">0.2</span><span class="fw" style="left:401px">4:49.94</span><span class="fg" style="left:457px">/opt/lion/lion</span></div>
<div class="r" style="top:721px"><span class="fw" style="left:16px">17162</span><span class="fw" style="left:58px">root</span><span class="fw" style="left:135px">20</span><span class="fw" style="left:170px">0</span><span class="fc" style="left:191px">705M</span><span class="fc" style="left:226px">11</span><span class="fw" style="left:240px">936</span><span class="fc" style="left:275px">4</span><span class="fw" style="left:282px">124</span><span class="fw" style="left:310px">S</span><span class="fw" style="left:331px">0.0</span><span class="fw" style="left:366px">0.1</span><span class="fm" style="left:394px">19h</span><span class="fw" style="left:415px">16:59</span><span class="fw" style="left:457px">/opt/mysqld_exporter/mysqld_exporter --co</span></div>
<div class="r" style="top:737px"><span class="fw" style="left:16px">10538</span><span class="fw" style="left:58px">root</span><span class="fw" style="left:135px">20</span><span class="fw" style="left:170px">0</span><span class="fc" style="left:184px">1101M</span><span class="fc" style="left:226px">99</span><span class="fw" style="left:240px">972</span><span class="fc" style="left:268px">12</span><span class="fw" style="left:282px">504</span><span class="fw" style="left:310px">S</span><span class="fw" style="left:331px">0.0</span><span class="fw" style="left:366px">0.6</span><span class="fw" style="left:401px">0:12.43</span><span class="fg" style="left:457px">/usr/local/guacamole/sbin/guacd -b 0.0.0.</span></div>
<div class="r" style="top:753px"><span class="fw" style="left:16px">13363</span><span class="fw" style="left:58px">root</span><span class="fw" style="left:135px">20</span><span class="fw" style="left:170px">0</span><span class="fc" style="left:184px">1257M</span><span class="fc" style="left:233px">214M</span><span class="fc" style="left:268px">10</span><span class="fw" style="left:282px">432</span><span class="fw" style="left:310px">S</span><span class="fw" style="left:331px">0.0</span><span class="fw" style="left:366px">1.4</span><span class="fw" style="left:401px">5:03.75</span><span class="fg" style="left:457px">/opt/nubosh/vmsec-host/file/bin/icsfilese</span></div>
<div class="r" style="top:769px"><span class="fw" style="left:16px">13354</span><span class="fw" style="left:58px">root</span><span class="fw" style="left:135px">20</span><span class="fw" style="left:170px">0</span><span class="fc" style="left:184px">1257M</span><span class="fc" style="left:233px">214M</span><span class="fc" style="left:268px">10</span><span class="fw" style="left:282px">432</span><span class="fw" style="left:310px">S</span><span class="fw" style="left:331px">0.0</span><span class="fw" style="left:366px">1.4</span><span class="fw" style="left:394px">10:14.83</span><span class="fg" style="left:457px">/opt/nubosh/vmsec-host/file/bin/icsfilese</span></div>
<div class="r" style="top:785px"><span class="fw" style="left:16px">13359</span><span class="fw" style="left:58px">root</span><span class="fw" style="left:135px">20</span><span class="fw" style="left:170px">0</span><span class="fc" style="left:184px">1257M</span><span class="fc" style="left:233px">214M</span><span class="fc" style="left:268px">10</span><span class="fw" style="left:282px">432</span><span class="fw" style="left:310px">S</span><span class="fw" style="left:331px">0.0</span><span class="fw" style="left:366px">1.4</span><span class="fw" style="left:401px">5:01.67</span><span class="fg" style="left:457px">/opt/nubosh/vmsec-host/file/bin/icsfilese</span></div>
<div class="r" style="top:801px"><span class="fw" style="left:16px">12858</span><span class="fw" style="left:58px">root</span><span class="fw" style="left:135px">20</span><span class="fw" style="left:170px">0</span><span class="fc" style="left:184px">1624M</span><span class="fc" style="left:226px">99</span><span class="fw" style="left:240px">368</span><span class="fc" style="left:275px">6</span><span class="fw" style="left:282px">196</span><span class="fw" style="left:310px">S</span><span class="fw" style="left:331px">0.0</span><span class="fw" style="left:366px">0.6</span><span class="fm" style="left:394px">24h</span><span class="fw" style="left:415px">03:30</span><span class="fw" style="left:457px">./mongod -config ../mongodb.conf</span></div>
<div class="r" style="top:817px"><span class="fw" style="left:16px">F1</span><span class="fk" style="left:30px">Help</span><span class="fw" style="left:72px">F2</span><span class="fk" style="left:86px">Setup</span><span class="fw" style="left:128px">F3</span><span class="fk" style="left:142px">Search</span><span class="fw" style="left:184px">F4</span><span class="fk" style="left:198px">Filter</span><span class="fw" style="left:240px">F5</span><span class="fk" style="left:254px">Tree</span><span class="fw" style="left:296px">F6</span><span class="fk" style="left:310px">SortBy</span><span class="fw" style="left:352px">F7</span><span class="fk" style="left:366px">Nice -</span><span class="fw" style="left:408px">F8</span><span class="fk" style="left:422px">Nice +</span><span class="fw" style="left:464px">F9</span><span class="fk" style="left:478px">Kill</span><span class="fw" style="left:520px">F10</span><span class="fk" style="left:541px">Quit</span></div>
<div class="r" style="top:849px"><span class="fw" style="left:16px">Ctrl +</span><span class="fuK" style="left:79px">&lt;</span><span class="fr" style="left:86px">g</span><span class="fuK" style="left:93px">&gt;</span><span class="fuK" style="left:107px">LOCK</span><span class="fuK" style="left:163px">&lt;</span><span class="fr" style="left:170px">p</span><span class="fuK" style="left:177px">&gt;</span><span class="fuK" style="left:191px">PANE</span><span class="fuK" style="left:247px">&lt;</span><span class="fr" style="left:254px">t</span><span class="fuK" style="left:261px">&gt;</span><span class="fuK" style="left:275px">TAB</span><span class="fuK" style="left:324px">&lt;</span><span class="fr" style="left:331px">n</span><span class="fuK" style="left:338px">&gt;</span><span class="fuK" style="left:352px">RESIZE</span><span class="fuK" style="left:422px">&lt;</span><span class="fr" style="left:429px">h</span><span class="fuK" style="left:436px">&gt;</span><span class="fuK" style="left:450px">MOVE</span><span class="fuK" style="left:506px">&lt;</span><span class="fr" style="left:513px">s</span><span class="fuK" style="left:520px">&gt;</span><span class="fuK" style="left:534px">SEARCH</span><span class="fuK" style="left:604px">&lt;</span><span class="fr" style="left:611px">o</span><span class="fuK" style="left:618px">&gt;</span><span class="fuK" style="left:632px">SESSION</span><span class="fuK" style="left:709px">&lt;</span><span class="fr" style="left:716px">q</span><span class="fuK" style="left:723px">&gt;</span><span class="fuK" style="left:737px">QUIT</span><span class="fo" style="left:1325px">Alt</span><span class="fw" style="left:1353px">+ &lt;</span><span class="fg" style="left:1374px">[]</span><span class="fw" style="left:1388px">&gt;</span><span class="fuK" style="left:1416px">VERTICAL</span></div>
<div class="r" style="top:865px"><span class="fw" style="left:16px">Tip:</span><span class="fo" style="left:51px">Alt</span><span class="fw" style="left:79px">+ &lt;</span><span class="fuG" style="left:100px">n</span><span class="fw" style="left:107px">&gt; =&gt; open new pane.</span><span class="fo" style="left:247px">Alt</span><span class="fw" style="left:275px">+ &lt;</span><span class="fuA" style="left:296px">←</span><span class="fuA" style="left:303px">↓</span><span class="fuA" style="left:310px">↑</span><span class="fuA" style="left:317px">→</span><span class="fw" style="left:324px">&gt; or</span><span class="fo" style="left:359px">Alt</span><span class="fw" style="left:387px">+ &lt;</span><span class="fuG" style="left:408px">hjkl</span><span class="fw" style="left:436px">&gt; =&gt; navigate between panes.</span><span class="fo" style="left:639px">Alt</span><span class="fw" style="left:667px">+ &lt;</span><span class="fuG" style="left:688px">+</span><span class="fw" style="left:695px">|</span><span class="fuG" style="left:702px">-</span><span class="fw" style="left:709px">&gt; =&gt; increase/decrease pane size.</span></div>
</div></body></html>
